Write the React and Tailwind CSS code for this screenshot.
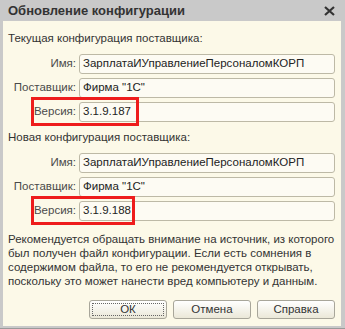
import React from 'react';

const font = { fontFamily: '"Liberation Sans", Arial, sans-serif' };

function Field({ label, value, mark }) {
  return (
    <div className="relative flex items-center h-[20px]">
      <div className="w-[71px] pr-[3px] text-right text-[#4a4a4a]">{label}</div>
      <div className="flex-1 h-[20px] flex items-center px-[3px] rounded-[3px] border border-[#bdb9a6] bg-[#fdfbf3] text-[#222]">
        {value}
      </div>
      {mark && (
        <div className={`absolute left-[23px] top-[-5px] h-[29px] border-[3px] border-[#ee1c1c] ${mark}`} />
      )}
    </div>
  );
}

function Btn({ children, focus }) {
  return (
    <button className="w-[78px] h-[19px] rounded-[3px] border border-[#a8a69a] bg-gradient-to-b from-[#ffffff] to-[#ebe8d8] text-[#333] flex items-center justify-center p-[2px]">
      <span className={`w-full h-full flex items-center justify-center ${focus ? 'border border-dotted border-[#666]' : ''}`}>
        {children}
      </span>
    </button>
  );
}

export default function App() {
  return (
    <div className="w-[345px] h-[329px] bg-[#c9c9c9] flex flex-col text-[11.5px]" style={font}>
      {/* title bar */}
      <div className="h-[21px] flex items-center justify-between pl-[8px] pr-[10px]">
        <span className="font-bold text-[13px] text-[#333]">Обновление конфигурации</span>
        <svg width="11" height="10" viewBox="0 0 11 10">
          <path d="M1 1 L10 9 M10 1 L1 9" stroke="#333" strokeWidth="2.2" />
        </svg>
      </div>

      <div className="flex-1 ml-[3px] mr-[4px] bg-[#fcf9e8] flex flex-col pt-[10px] pl-[5px] pr-[6px]">
        <div className="h-[15px] leading-[15px] text-[#333]">Текущая конфигурация поставщика:</div>
        <div className="mt-[8px] flex flex-col gap-[4px]">
          <Field label="Имя:" value="ЗарплатаИУправлениеПерсоналомКОРП" />
          <Field label="Поставщик:" value={'Фирма "1С"'} />
          <Field label="Версия:" value="3.1.9.187" mark="w-[108px]" />
        </div>

        <div className="mt-[8px] h-[15px] leading-[15px] text-[#333]">Новая конфигурация поставщика:</div>
        <div className="mt-[8px] flex flex-col gap-[4px]">
          <Field label="Имя:" value="ЗарплатаИУправлениеПерсоналомКОРП" />
          <Field label="Поставщик:" value={'Фирма "1С"'} />
          <Field label="Версия:" value="3.1.9.188" mark="w-[104px]" />
        </div>

        <p className="mt-[11px] leading-[14px] text-[#333]">
          Рекомендуется обращать внимание на источник, из которого был получен файл конфигурации. Если есть сомнения в содержимом файла, то его не рекомендуется открывать, поскольку это может нанести вред компьютеру и данным.
        </p>

        <div className="mt-[12px] flex justify-end gap-[6px]">
          <Btn focus>ОК</Btn>
          <Btn>Отмена</Btn>
          <Btn>Справка</Btn>
        </div>
      </div>
      <div className="h-[3px] border-b border-[#9a9a9a]" />
    </div>
  );
}
